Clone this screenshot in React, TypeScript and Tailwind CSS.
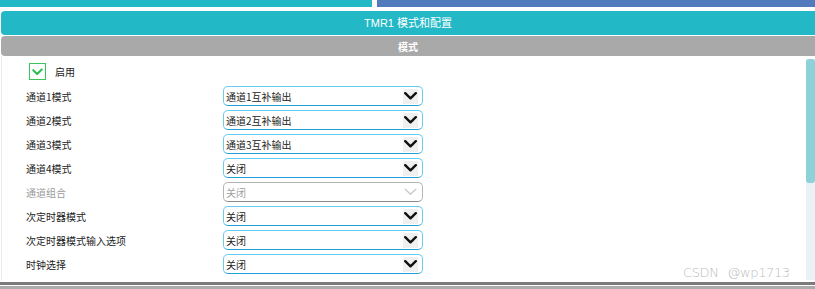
import React from "react";

const rows: { label: string; value: string; disabled?: boolean }[] = [
  { label: "通道1模式", value: "通道1互补输出" },
  { label: "通道2模式", value: "通道2互补输出" },
  { label: "通道3模式", value: "通道3互补输出" },
  { label: "通道4模式", value: "关闭" },
  { label: "通道组合", value: "关闭", disabled: true },
  { label: "次定时器模式", value: "关闭" },
  { label: "次定时器模式输入选项", value: "关闭" },
  { label: "时钟选择", value: "关闭" },
];

function Chevron({ disabled }: { disabled?: boolean }) {
  return (
    <div className={"flex h-[15px] w-[15px] items-center justify-center " + (disabled ? "" : "bg-[#f0f0f0]")}>
      <svg width="13" height="8" viewBox="0 0 13 8">
        <polyline
          points="1.2,1.2 6.5,6.3 11.8,1.2"
          fill="none"
          stroke={disabled ? "#c8c8c8" : "#111"}
          strokeWidth={disabled ? 1.3 : 2.4}
          strokeLinecap="round"
          strokeLinejoin="round"
        />
      </svg>
    </div>
  );
}

export default function App() {
  return (
    <div
      className="relative h-[289px] w-[815px] overflow-hidden bg-white"
      style={{ fontFamily: '"Noto Sans CJK SC", "Liberation Sans", sans-serif' }}
    >
      <div className="flex h-[7px] gap-[5px]">
        <div className="w-[372px] bg-[#22b8c6]" />
        <div className="flex-1 bg-[#527bbd]" />
      </div>
      <div className="mt-[4px] ml-[1px] flex h-[24px] items-center justify-center rounded-l-[4px] bg-[#22b8c6] text-[11px] text-white" style={{ fontFamily: '"Liberation Sans", "Noto Sans CJK SC", sans-serif' }}>
        TMR1 模式和配置
      </div>
      <div className="mt-[1px] ml-[1px] flex h-[20px] items-center justify-center rounded-l-[4px] bg-[#a9a9a9] text-[10px] font-bold text-white">
        模式
      </div>
      <div className="flex h-[225px]">
        <div className="ml-[1px] flex-1 border-l border-[#e6eef3] pt-[7px]">
          <div className="flex h-[17px] items-center">
            <div className="ml-[27px] flex h-[17px] w-[17px] items-center justify-center border-[1.5px] border-[#3cc45c] bg-white">
              <svg width="11" height="8" viewBox="0 0 11 8">
                <polyline points="1.3,2.2 5.2,6 9.7,1.5" fill="none" stroke="#2fbf57" strokeWidth="2.1" strokeLinecap="round" strokeLinejoin="round" />
              </svg>
            </div>
            <span className="ml-[9px] text-[10px] text-[#222]">启用</span>
          </div>
          <div className="mt-[6px] flex flex-col gap-[4px]">
            {rows.map((r) => (
              <div key={r.label} className="flex h-[20px] items-center">
                <span className={"ml-[24px] w-[197px] text-[10px] " + (r.disabled ? "text-[#9a9a9a]" : "text-[#222]")}>
                  {r.label}
                </span>
                <div
                  className={
                    "flex h-[20px] w-[200px] items-center justify-between rounded-[5px] border pl-[2px] pr-[4px] text-[10px] " +
                    (r.disabled
                      ? "border-[#b5b5b5] border-b-[#8a8a8a] text-[#a0a0a0]"
                      : "border-[#67ccf2] border-b-[#1e9fd9] text-[#222]")
                  }
                >
                  <span>{r.value}</span>
                  <Chevron disabled={r.disabled} />
                </div>
              </div>
            ))}
          </div>
        </div>
        <div className="mt-[3px] mb-[1px] w-[9px] bg-[#e9f1f6]">
          <div className="h-[124px] w-[9px] rounded-[3px] bg-[#8ed1d9]" />
        </div>
      </div>
      <div className="mt-[1px] h-[3px] bg-[#7b7b7b]" />
      <div className="mt-[1px] h-[4px] bg-[#ababab]" />
      <div
        className="absolute left-[683px] top-[263px] flex gap-[9px] text-[13px] font-light text-[#bdbdbd]"
        style={{ fontFamily: '"DejaVu Sans", "Liberation Sans", sans-serif', letterSpacing: "-0.4px" }}
      >
        <span>CSDN</span>
        <span>@wp1713</span>
      </div>
    </div>
  );
}
